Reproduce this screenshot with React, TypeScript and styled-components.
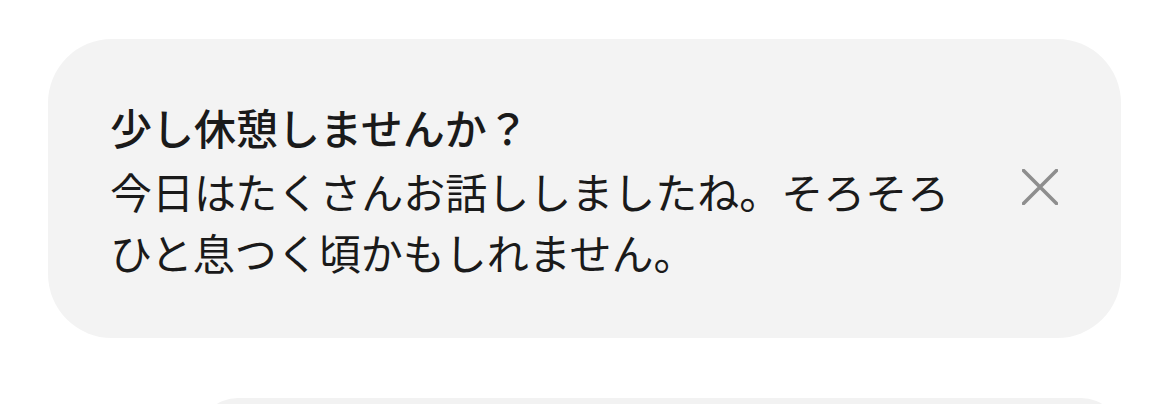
import React from "react";
import styled, { createGlobalStyle } from "styled-components";

const GlobalStyle = createGlobalStyle`
  html, body {
    margin: 0;
    padding: 0;
    background: #ffffff;
  }
  body {
    font-family: "Noto Sans CJK JP", "Noto Sans", sans-serif;
    -webkit-font-smoothing: antialiased;
  }
`;

const Page = styled.div`
  width: 1170px;
  height: 404px;
  overflow: hidden;
  box-sizing: border-box;
  padding: 39px 49px 0 48px;
  display: flex;
  flex-direction: column;
  gap: 60px;
`;

const Card = styled.div`
  box-sizing: border-box;
  flex-shrink: 0;
  height: 299px;
  background: #f3f3f3;
  border-radius: 64px;
  padding: 0 63px 0 62px;
  display: flex;
  align-items: center;
  justify-content: space-between;
`;

const Content = styled.div`
  width: 860px;
  display: flex;
  flex-direction: column;
  gap: 3px;
  color: #1a1a1a;
  font-size: 42px;
  line-height: 61px;
`;

const Title = styled.div`
  font-weight: 500;
`;

const Body = styled.div`
  font-weight: 400;
`;

const CloseButton = styled.button`
  width: 36px;
  height: 36px;
  padding: 0;
  border: none;
  background: transparent;
  display: flex;
  align-items: center;
  justify-content: center;
  cursor: pointer;
  margin-top: -4px;
`;

const NextBubble = styled.div`
  flex-shrink: 0;
  margin-left: 150px;
  height: 80px;
  background: #f2f2f2;
  border-radius: 64px;
`;

export default function App() {
  return (
    <>
      <GlobalStyle />
      <Page>
        <Card>
          <Content>
            <Title>少し休憩しませんか？</Title>
            <Body>
              今日はたくさんお話ししましたね。そろそろひと息つく頃かもしれません。
            </Body>
          </Content>
          <CloseButton aria-label="閉じる">
            <svg width="36" height="36" viewBox="0 0 36 36" fill="none">
              <path
                d="M1.5 1.5 L34.5 34.5 M34.5 1.5 L1.5 34.5"
                stroke="#8e8e8e"
                strokeWidth="3.6"
                strokeLinecap="round"
              />
            </svg>
          </CloseButton>
        </Card>
        <NextBubble />
      </Page>
    </>
  );
}
